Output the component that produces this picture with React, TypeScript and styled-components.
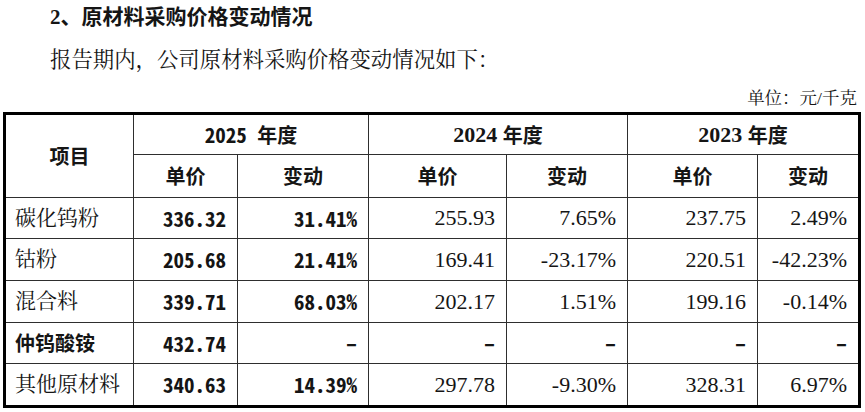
import React from "react";
import styled, { createGlobalStyle, css } from "styled-components";

const GlobalStyle = createGlobalStyle`
  html, body { margin: 0; padding: 0; background: #ffffff; }
  body { width: 865px; height: 412px; overflow: hidden; }
`;

const SERIF = `"Liberation Serif", "Noto Serif CJK SC", "Noto Sans CJK SC", serif`;
const HEI = `"Noto Sans Mono CJK SC", "Noto Sans CJK SC", sans-serif`;

const Page = styled.div`
  display: flex;
  flex-direction: column;
  color: #151515;
  font-family: ${SERIF};
`;

const Heading = styled.h2`
  margin: 0 0 0 50px;
  height: 35px;
  line-height: 35px;
  font-size: 21px;
  font-weight: 700;
  font-family: "Liberation Serif", "Noto Sans CJK SC", serif;
`;

const Paragraph = styled.p`
  margin: 8px 0 0 50px;
  height: 34px;
  line-height: 34px;
  font-size: 21.4px;
`;

const Unit = styled.div`
  margin-top: 9px;
  padding-right: 8px;
  height: 24px;
  line-height: 24px;
  font-size: 17.5px;
  text-align: right;
`;

const Grid = styled.div`
  margin: 2px 0 0 3px;
  width: fit-content;
  display: grid;
  grid-template-columns: 127px 103px 130px 137px 120px 129px 100px;
  grid-template-rows: 39px 42px 40px 41px 41px 40px 41px;
  gap: 1px;
  background: #2e2e2e;
  border: 3px solid #000;
`;

type Align = "left" | "center" | "right";
type Face = "serif" | "hei" | "heiBold" | "dash";

const faceStyles: Record<Face, ReturnType<typeof css>> = {
  serif: css`
    font-family: ${SERIF};
    font-weight: 400;
    font-size: 22px;
  `,
  hei: css`
    font-family: ${HEI};
    font-weight: 700;
    font-size: 21px;
  `,
  dash: css`
    font-family: "Noto Sans CJK SC", sans-serif;
    font-weight: 900;
    font-size: 20px;
  `,
  heiBold: css`
    font-family: "Noto Sans CJK SC", sans-serif;
    font-weight: 700;
    font-size: 20px;
  `,
};

const Cell = styled.div<{ $align?: Align; $face?: Face; $rowSpan?: number; $colSpan?: number }>`
  background: #ffffff;
  display: flex;
  align-items: center;
  justify-content: ${(p) =>
    p.$align === "left" ? "flex-start" : p.$align === "right" ? "flex-end" : "center"};
  padding: ${(p) => (p.$align === "left" ? "0 0 0 9px" : p.$align === "right" ? "0 11px 0 0" : "0")};
  line-height: 1;
  white-space: pre;
  ${(p) => p.$rowSpan && `grid-row: span ${p.$rowSpan};`}
  ${(p) => p.$colSpan && `grid-column: span ${p.$colSpan};`}
  ${(p) => faceStyles[p.$face ?? "serif"]}
`;

const LabelText = styled.span<{ $bold?: boolean }>`
  font-family: ${(p) => (p.$bold ? `"Noto Sans CJK SC", sans-serif` : SERIF)};
  font-weight: ${(p) => (p.$bold ? 700 : 400)};
  font-size: ${(p) => (p.$bold ? "20px" : "21px")};
`;

const YearDigits = styled.span<{ $serif?: boolean }>`
  font-family: ${(p) => (p.$serif ? SERIF : HEI)};
  font-weight: 700;
  font-size: ${(p) => (p.$serif ? "22px" : "21px")};
`;

const YearSuffix = styled.span`
  font-family: "Noto Sans CJK SC", sans-serif;
  font-weight: 700;
  font-size: 20px;
`;

type Row = {
  name: string;
  bold?: boolean;
  values: [string, string, string, string, string, string];
};

const rows: Row[] = [
  { name: "碳化钨粉", values: ["336.32", "31.41%", "255.93", "7.65%", "237.75", "2.49%"] },
  { name: "钴粉", values: ["205.68", "21.41%", "169.41", "-23.17%", "220.51", "-42.23%"] },
  { name: "混合料", values: ["339.71", "68.03%", "202.17", "1.51%", "199.16", "-0.14%"] },
  { name: "仲钨酸铵", bold: true, values: ["432.74", "–", "–", "–", "–", "–"] },
  { name: "其他原材料", values: ["340.63", "14.39%", "297.78", "-9.30%", "328.31", "6.97%"] },
];

const faceFor = (value: string, index: number): Face =>
  value === "–" ? "dash" : index < 2 ? "hei" : "serif";

export default function App() {
  return (
    <>
      <GlobalStyle />
      <Page>
        <Heading>2、原材料采购价格变动情况</Heading>
        <Paragraph>报告期内，公司原材料采购价格变动情况如下：</Paragraph>
        <Unit>单位：元/千克</Unit>
        <Grid>
          <Cell $rowSpan={2} $face="heiBold">项目</Cell>
          <Cell $colSpan={2}>
            <YearDigits>2025 </YearDigits>
            <YearSuffix>年度</YearSuffix>
          </Cell>
          <Cell $colSpan={2}>
            <YearDigits $serif>2024 </YearDigits>
            <YearSuffix>年度</YearSuffix>
          </Cell>
          <Cell $colSpan={2}>
            <YearDigits $serif>2023 </YearDigits>
            <YearSuffix>年度</YearSuffix>
          </Cell>
          {["单价", "变动", "单价", "变动", "单价", "变动"].map((t, i) => (
            <Cell key={`h${i}`} $face="heiBold">
              {t}
            </Cell>
          ))}
          {rows.map((r) => (
            <React.Fragment key={r.name}>
              <Cell $align="left">
                <LabelText $bold={r.bold}>{r.name}</LabelText>
              </Cell>
              {r.values.map((v, i) => (
                <Cell key={i} $align="right" $face={faceFor(v, i)}>
                  {v}
                </Cell>
              ))}
            </React.Fragment>
          ))}
        </Grid>
      </Page>
    </>
  );
}
